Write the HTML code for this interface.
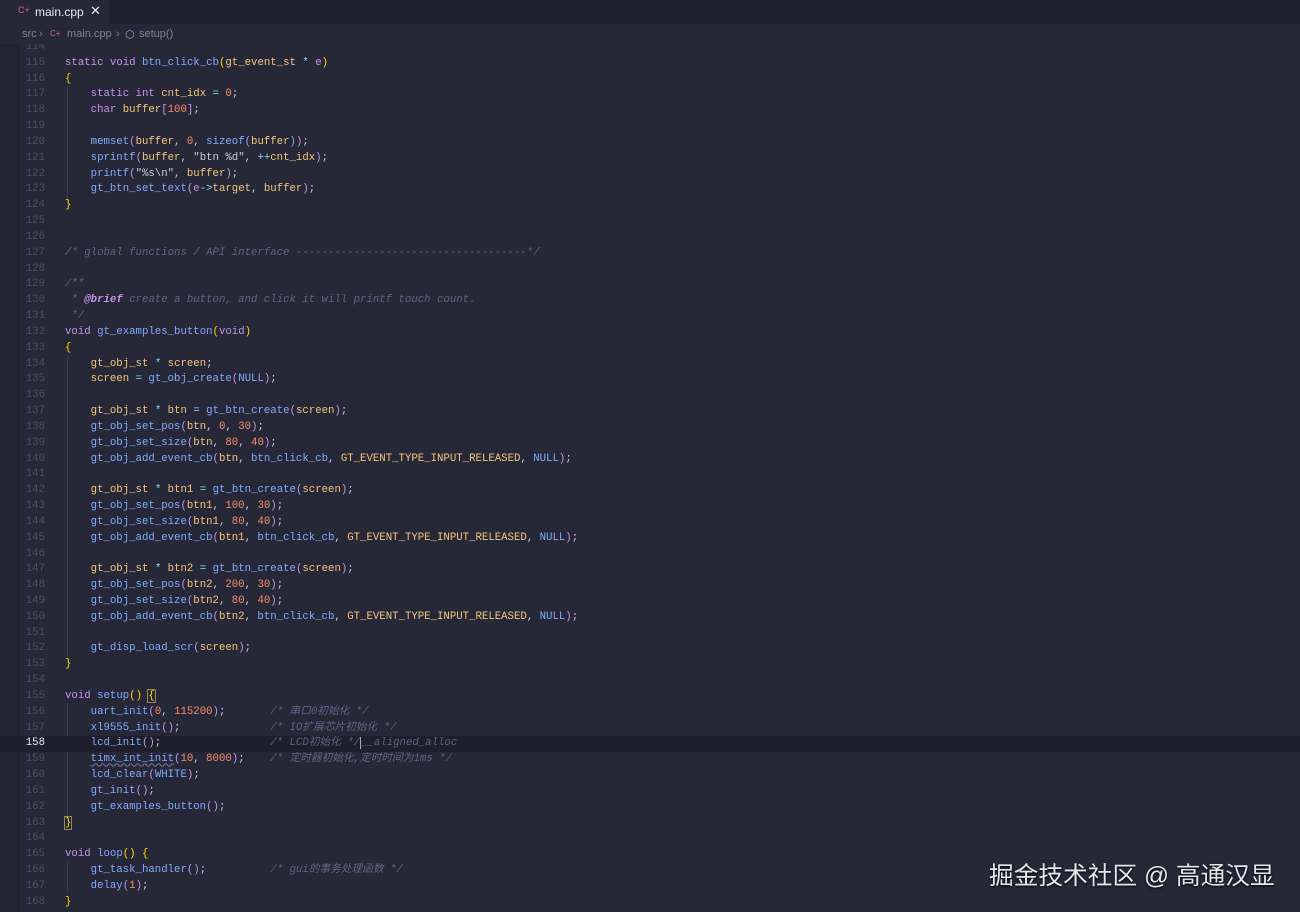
<!DOCTYPE html>
<html><head><meta charset="utf-8"><style>
html,body{margin:0;width:1300px;height:912px;overflow:hidden}
body{background:#262837;position:relative;font-family:"Liberation Mono","Noto Sans CJK SC",monospace}
#tabs{position:absolute;left:0;top:0;width:1300px;height:24px;background:#1f202d}
#tab{position:absolute;left:0;top:0;width:109px;height:24px;background:#262837;font-family:"Liberation Sans",sans-serif;font-size:12px;color:#e6e8f0}
#bc{position:absolute;left:0;top:24px;width:1300px;height:20px;background:#262837;z-index:3;font-family:"Liberation Sans",sans-serif;font-size:11px;color:#7d8299}
#strip{position:absolute;left:0;top:44px;width:20px;height:868px;background:#22232f}
#code{position:absolute;left:0;top:40px;width:1300px;font-size:10.7px;line-height:15.83px;color:#c6cbe0}
.l{height:15.83px;position:relative}
.ln{position:absolute;left:0;top:0;width:45px;text-align:right;color:#4a4e66}
.cd{position:absolute;left:65px;top:0;white-space:pre}
.cur{background:#1e1f2b}
.cur .ln{color:#e8e8f0}
.k{color:#c792ea}.f{color:#82aaff}.v{color:#f2c67e}.n{color:#f78c6c}.c{color:#5d6385;font-style:italic}.o{color:#89ddff}.p{color:#c792ea}.y{color:#ffd700}.s{color:#c9cde0}.g{color:#f2c67e}
.guide{position:absolute;left:67px;width:1px;background:#383b50}
</style></head><body>
<div id="tabs"><div id="tab"><span style="position:absolute;left:18px;top:5px;color:#c66b8e;font-size:9px">C+</span><span style="position:absolute;left:35px;top:5px">main.cpp</span><span style="position:absolute;left:90px;top:3px;font-size:13px">✕</span></div></div>
<div id="bc"><span style="position:absolute;left:22px;top:4px">src</span><span style="position:absolute;left:39px;top:4px">›</span><span style="position:absolute;left:50px;top:5px;color:#c66b8e;font-size:8px">C+</span><span style="position:absolute;left:67px;top:4px">main.cpp</span><span style="position:absolute;left:116px;top:4px">›</span><span style="position:absolute;left:125px;top:4px;color:#b48ee0">⬡</span><span style="position:absolute;left:139px;top:4px">setup()</span></div>
<div id="strip"></div>
<div class="guide" style="top:86px;height:118px"></div>
<div class="guide" style="top:355px;height:308px"></div>
<div class="guide" style="top:703px;height:118px"></div>
<div class="guide" style="top:861px;height:32px"></div>
<div id="code"><div class="l"><span class="ln">114</span></div><div class="l"><span class="ln">115</span><span class="cd"><span class="k">static void</span> <span class="f">btn_click_cb</span><span class="y">(</span><span class="g">gt_event_st</span> <span class="o">*</span> <span class="p">e</span><span class="y">)</span></span></div><div class="l"><span class="ln">116</span><span class="cd"><span class="y">{</span></span></div><div class="l"><span class="ln">117</span><span class="cd">    <span class="k">static int</span> <span class="v">cnt_idx</span> <span class="o">=</span> <span class="n">0</span>;</span></div><div class="l"><span class="ln">118</span><span class="cd">    <span class="k">char</span> <span class="v">buffer</span><span class="p">[</span><span class="n">100</span><span class="p">]</span>;</span></div><div class="l"><span class="ln">119</span></div><div class="l"><span class="ln">120</span><span class="cd">    <span class="f">memset</span><span class="p">(</span><span class="v">buffer</span>, <span class="n">0</span>, <span class="f">sizeof</span><span class="f">(</span><span class="v">buffer</span><span class="f">)</span><span class="p">)</span>;</span></div><div class="l"><span class="ln">121</span><span class="cd">    <span class="f">sprintf</span><span class="p">(</span><span class="v">buffer</span>, <span class="s">"btn %d"</span>, <span class="o">++</span><span class="v">cnt_idx</span><span class="p">)</span>;</span></div><div class="l"><span class="ln">122</span><span class="cd">    <span class="f">printf</span><span class="p">(</span><span class="s">"%s\n"</span>, <span class="v">buffer</span><span class="p">)</span>;</span></div><div class="l"><span class="ln">123</span><span class="cd">    <span class="f">gt_btn_set_text</span><span class="p">(</span><span class="p">e</span><span class="o">-&gt;</span><span class="v">target</span>, <span class="v">buffer</span><span class="p">)</span>;</span></div><div class="l"><span class="ln">124</span><span class="cd"><span class="y">}</span></span></div><div class="l"><span class="ln">125</span></div><div class="l"><span class="ln">126</span></div><div class="l"><span class="ln">127</span><span class="cd c">/* global functions / API interface ------------------------------------*/</span></div><div class="l"><span class="ln">128</span></div><div class="l"><span class="ln">129</span><span class="cd c">/**</span></div><div class="l"><span class="ln">130</span><span class="cd c"> * <span style="color:#c792ea;font-weight:bold">@brief</span> create a button, and click it will printf touch count.</span></div><div class="l"><span class="ln">131</span><span class="cd c"> */</span></div><div class="l"><span class="ln">132</span><span class="cd"><span class="k">void</span> <span class="f">gt_examples_button</span><span class="y">(</span><span class="k">void</span><span class="y">)</span></span></div><div class="l"><span class="ln">133</span><span class="cd"><span class="y">{</span></span></div><div class="l"><span class="ln">134</span><span class="cd">    <span class="g">gt_obj_st</span> <span class="o">*</span> <span class="v">screen</span>;</span></div><div class="l"><span class="ln">135</span><span class="cd">    <span class="v">screen</span> <span class="o">=</span> <span class="f">gt_obj_create</span><span class="p">(</span><span class="f">NULL</span><span class="p">)</span>;</span></div><div class="l"><span class="ln">136</span></div><div class="l"><span class="ln">137</span><span class="cd">    <span class="g">gt_obj_st</span> <span class="o">*</span> <span class="v">btn</span> <span class="o">=</span> <span class="f">gt_btn_create</span><span class="p">(</span><span class="v">screen</span><span class="p">)</span>;</span></div><div class="l"><span class="ln">138</span><span class="cd">    <span class="f">gt_obj_set_pos</span><span class="p">(</span><span class="v">btn</span>, <span class="n">0</span>, <span class="n">30</span><span class="p">)</span>;</span></div><div class="l"><span class="ln">139</span><span class="cd">    <span class="f">gt_obj_set_size</span><span class="p">(</span><span class="v">btn</span>, <span class="n">80</span>, <span class="n">40</span><span class="p">)</span>;</span></div><div class="l"><span class="ln">140</span><span class="cd">    <span class="f">gt_obj_add_event_cb</span><span class="p">(</span><span class="v">btn</span>, <span class="f">btn_click_cb</span>, <span class="g">GT_EVENT_TYPE_INPUT_RELEASED</span>, <span class="f">NULL</span><span class="p">)</span>;</span></div><div class="l"><span class="ln">141</span></div><div class="l"><span class="ln">142</span><span class="cd">    <span class="g">gt_obj_st</span> <span class="o">*</span> <span class="v">btn1</span> <span class="o">=</span> <span class="f">gt_btn_create</span><span class="p">(</span><span class="v">screen</span><span class="p">)</span>;</span></div><div class="l"><span class="ln">143</span><span class="cd">    <span class="f">gt_obj_set_pos</span><span class="p">(</span><span class="v">btn1</span>, <span class="n">100</span>, <span class="n">30</span><span class="p">)</span>;</span></div><div class="l"><span class="ln">144</span><span class="cd">    <span class="f">gt_obj_set_size</span><span class="p">(</span><span class="v">btn1</span>, <span class="n">80</span>, <span class="n">40</span><span class="p">)</span>;</span></div><div class="l"><span class="ln">145</span><span class="cd">    <span class="f">gt_obj_add_event_cb</span><span class="p">(</span><span class="v">btn1</span>, <span class="f">btn_click_cb</span>, <span class="g">GT_EVENT_TYPE_INPUT_RELEASED</span>, <span class="f">NULL</span><span class="p">)</span>;</span></div><div class="l"><span class="ln">146</span></div><div class="l"><span class="ln">147</span><span class="cd">    <span class="g">gt_obj_st</span> <span class="o">*</span> <span class="v">btn2</span> <span class="o">=</span> <span class="f">gt_btn_create</span><span class="p">(</span><span class="v">screen</span><span class="p">)</span>;</span></div><div class="l"><span class="ln">148</span><span class="cd">    <span class="f">gt_obj_set_pos</span><span class="p">(</span><span class="v">btn2</span>, <span class="n">200</span>, <span class="n">30</span><span class="p">)</span>;</span></div><div class="l"><span class="ln">149</span><span class="cd">    <span class="f">gt_obj_set_size</span><span class="p">(</span><span class="v">btn2</span>, <span class="n">80</span>, <span class="n">40</span><span class="p">)</span>;</span></div><div class="l"><span class="ln">150</span><span class="cd">    <span class="f">gt_obj_add_event_cb</span><span class="p">(</span><span class="v">btn2</span>, <span class="f">btn_click_cb</span>, <span class="g">GT_EVENT_TYPE_INPUT_RELEASED</span>, <span class="f">NULL</span><span class="p">)</span>;</span></div><div class="l"><span class="ln">151</span></div><div class="l"><span class="ln">152</span><span class="cd">    <span class="f">gt_disp_load_scr</span><span class="p">(</span><span class="v">screen</span><span class="p">)</span>;</span></div><div class="l"><span class="ln">153</span><span class="cd"><span class="y">}</span></span></div><div class="l"><span class="ln">154</span></div><div class="l"><span class="ln">155</span><span class="cd"><span class="k">void</span> <span class="f">setup</span><span class="y">()</span> <span class="y" style="outline:1px solid #8a8a5a">{</span></span></div><div class="l"><span class="ln">156</span><span class="cd">    <span class="f">uart_init</span><span class="p">(</span><span class="n">0</span>, <span class="n">115200</span><span class="p">)</span>;       <span class="c">/* 串口0初始化 */</span></span></div><div class="l"><span class="ln">157</span><span class="cd">    <span class="f">xl9555_init</span><span class="p">()</span>;              <span class="c">/* IO扩展芯片初始化 */</span></span></div><div class="l cur"><span class="ln">158</span><span class="cd">    <span class="f">lcd_init</span><span class="p">()</span>;                 <span class="c">/* LCD初始化 */<span style="border-left:1px solid #aab">__aligned_alloc</span></span></span></div><div class="l"><span class="ln">159</span><span class="cd">    <span class="f" style="text-decoration:underline wavy #6c7090">timx_int_init</span><span class="p">(</span><span class="n">10</span>, <span class="n">8000</span><span class="p">)</span>;    <span class="c">/* 定时器初始化,定时时间为1ms */</span></span></div><div class="l"><span class="ln">160</span><span class="cd">    <span class="f">lcd_clear</span><span class="p">(</span><span class="f">WHITE</span><span class="p">)</span>;</span></div><div class="l"><span class="ln">161</span><span class="cd">    <span class="f">gt_init</span><span class="p">()</span>;</span></div><div class="l"><span class="ln">162</span><span class="cd">    <span class="f">gt_examples_button</span><span class="p">()</span>;</span></div><div class="l"><span class="ln">163</span><span class="cd"><span class="y" style="outline:1px solid #8a8a5a">}</span></span></div><div class="l"><span class="ln">164</span></div><div class="l"><span class="ln">165</span><span class="cd"><span class="k">void</span> <span class="f">loop</span><span class="y">()</span> <span class="y">{</span></span></div><div class="l"><span class="ln">166</span><span class="cd">    <span class="f">gt_task_handler</span><span class="p">()</span>;          <span class="c">/* gui的事务处理函数 */</span></span></div><div class="l"><span class="ln">167</span><span class="cd">    <span class="f">delay</span><span class="p">(</span><span class="n">1</span><span class="p">)</span>;</span></div><div class="l"><span class="ln">168</span><span class="cd"><span class="y">}</span></span></div></div>
<div style="position:absolute;left:989px;top:856px;font-family:'Liberation Sans','Noto Sans CJK SC',sans-serif;font-size:24.7px;color:#e4e6ee;text-shadow:0 1px 2px #000;white-space:nowrap">掘金技术社区 @ 高通汉显</div>
</body></html>
